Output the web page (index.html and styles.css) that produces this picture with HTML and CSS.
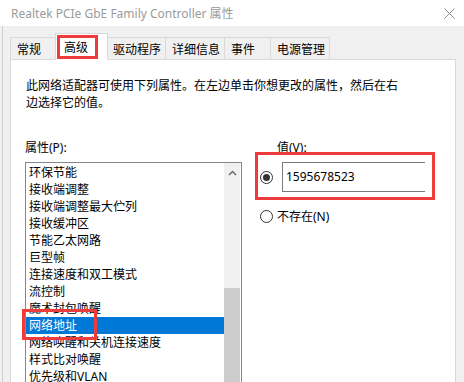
FILE: index.html
```html
<!DOCTYPE html>
<html lang="zh-CN">
<head>
<meta charset="utf-8">
<title>Realtek PCIe GbE Family Controller 属性</title>
<link rel="stylesheet" href="styles.css">
</head>
<body>
<div class="window">
  <div class="titlebar">
    <span class="title">Realtek PCIe GbE Family Controller 属性</span>
    <svg class="close" width="11" height="11" viewBox="0 0 11 11"><path d="M0.5 0.5 L10.5 10.5 M10.5 0.5 L0.5 10.5" stroke="#8a8a8a" stroke-width="1" fill="none"/></svg>
  </div>
  <div class="wbody">
    <div class="tabs">
      <div class="tab tab-first">常规</div>
      <div class="tab tab-active">高级</div>
      <div class="tab">驱动程序</div>
      <div class="tab">详细信息</div>
      <div class="tab">事件</div>
      <div class="tab">电源管理</div>
    </div>
    <div class="panel">
      <p class="desc">此网络适配器可使用下列属性。在左边单击你想更改的属性，然后在右<br>边选择它的值。</p>
      <div class="cols">
        <div class="left">
          <div class="label">属性(P):</div>
          <div class="listbox">
            <ul class="items">
              <li>环保节能</li>
              <li>接收端调整</li>
              <li>接收端调整最大伫列</li>
              <li>接收缓冲区</li>
              <li>节能乙太网路</li>
              <li>巨型帧</li>
              <li>连接速度和双工模式</li>
              <li>流控制</li>
              <li>魔术封包唤醒</li>
              <li class="sel">网络地址</li>
              <li>网络唤醒和关机连接速度</li>
              <li>样式比对唤醒</li>
              <li>优先级和VLAN</li>
            </ul>
            <div class="scrollbar">
              <div class="sb-up"><svg width="9" height="6" viewBox="0 0 9 6"><path d="M1 5 L4.5 1.5 L8 5" stroke="#606060" stroke-width="1.3" fill="none"/></svg></div>
              <div class="sb-track"></div>
              <div class="sb-thumb"></div>
            </div>
          </div>
        </div>
        <div class="right">
          <div class="label vlabel">值(V):</div>
          <div class="vrow">
            <span class="radio radio-on"></span>
            <div class="input">1595678523</div>
          </div>
          <div class="vrow2">
            <span class="radio"></span>
            <span class="rtext">不存在(N)</span>
          </div>
        </div>
      </div>
    </div>
  </div>
  <div class="mark mark-tab"></div>
  <div class="mark mark-value"></div>
  <div class="mark mark-item"></div>
</div>
</body>
</html>
```
FILE: styles.css
```css
* { box-sizing: border-box; }
html, body { margin: 0; padding: 0; }
body {
  width: 464px;
  height: 382px;
  overflow: hidden;
  font-family: "Noto Sans", "Noto Sans CJK SC", sans-serif;
  font-size: 12px;
  color: #000;
  background: #f0f0f0;
}
.window {
  position: relative;
  width: 464px;
  height: 382px;
  overflow: hidden;
  background: #f0f0f0;
}
.titlebar {
  height: 26px;
  background: #fff;
  display: flex;
  align-items: center;
  justify-content: space-between;
  padding: 0 9px 1px 11px;
}
.title {
  color: #9b9b9b;
  font-size: 12px;
  white-space: nowrap;
  font-family: "Noto Sans", "Noto Sans CJK SC", sans-serif;
}
.close { display: block; margin-top: 1px; }
.wbody {
  margin-left: 2px;
  border-left: 1px solid #cfcfcf;
  padding: 7px 7px 0 7px;
  height: 356px;
}
.tabs {
  display: flex;
  align-items: flex-end;
  height: 26px;
  font-family: "Noto Sans CJK SC", sans-serif;
}
.tab {
  height: 22px;
  line-height: 21px;
  min-width: 47px;
  padding: 0 4px 0 6px;
  border: 1px solid #d9d9d9;
  border-bottom: none;
  margin-left: -1px;
  background: #f0f0f0;
  white-space: nowrap;
}
.tab-first { margin-left: 0; }
.tab-active {
  position: relative;
  z-index: 2;
  height: 27px;
  line-height: 25px;
  min-width: 53px;
  padding-left: 8px;
  margin-left: -2px;
  margin-right: -1px;
  margin-bottom: -1px;
  background: #fff;
}
.panel {
  position: relative;
  z-index: 1;
  width: 446px;
  height: 330px;
  background: #fff;
  border: 1px solid #d9d9d9;
  padding: 16px 0 0 14px;
  font-family: "Noto Sans", "Noto Sans CJK SC", sans-serif;
}
.desc {
  margin: 0;
  padding-left: 1px;
  line-height: 17px;
  font-family: "Noto Sans CJK SC", sans-serif;
}
.cols {
  display: flex;
  margin-top: 29px;
  gap: 18px;
}
.left { width: 217px; }
.label {
  line-height: 17px;
  height: 17px;
  margin-bottom: 6px;
}
.listbox {
  display: flex;
  width: 217px;
  height: 230px;
  border: 1px solid #828790;
  background: #fff;
}
.items {
  list-style: none;
  margin: 0;
  padding: 1px 0 0 0;
  width: 198px;
  font-family: "Noto Sans CJK SC", sans-serif;
}
.items li {
  height: 17px;
  line-height: 17px;
  padding-left: 3px;
  white-space: nowrap;
  font-family: "Noto Sans", "Noto Sans CJK SC", sans-serif;
}
.items li.sel {
  background: #0078d7;
  color: #fff;
}
.scrollbar {
  width: 16px;
  margin-left: 0;
  display: flex;
  flex-direction: column;
  background: #f0f0f0;
}
.sb-up {
  height: 17px;
  display: flex;
  align-items: center;
  justify-content: center;
  padding-top: 2px;
}
.sb-track { height: 108px; }
.sb-thumb { flex: 1; background: #cdcdcd; }
.right { padding-left: 0; }
.vlabel { padding-left: 17px; }
.vrow {
  display: flex;
  align-items: center;
  height: 30px;
}
.radio {
  display: inline-block;
  width: 13px;
  height: 13px;
  border: 1px solid #333;
  border-radius: 50%;
  background: #fff;
  position: relative;
  flex: none;
}
.radio-on::after {
  content: "";
  position: absolute;
  left: 2px;
  top: 2px;
  width: 7px;
  height: 7px;
  border-radius: 50%;
  background: #333;
}
.input {
  margin-left: 9px;
  width: 143px;
  height: 30px;
  line-height: 28px;
  border: 1px solid #7a7a7a;
  border-right: none;
  padding-left: 3px;
  font-family: "Noto Sans", sans-serif;
}
.vrow2 {
  display: flex;
  align-items: center;
  margin-top: 16px;
  height: 17px;
}
.rtext { margin-left: 4px; line-height: 17px; }
.mark {
  position: absolute;
  border: 3px solid #ee3b3b;
  z-index: 5;
}
.mark-tab { left: 57px; top: 35px; width: 41px; height: 24px; }
.mark-value { left: 255px; top: 152px; width: 180px; height: 48px; }
.mark-item { left: 22px; top: 309px; width: 75px; height: 31px; }
```
